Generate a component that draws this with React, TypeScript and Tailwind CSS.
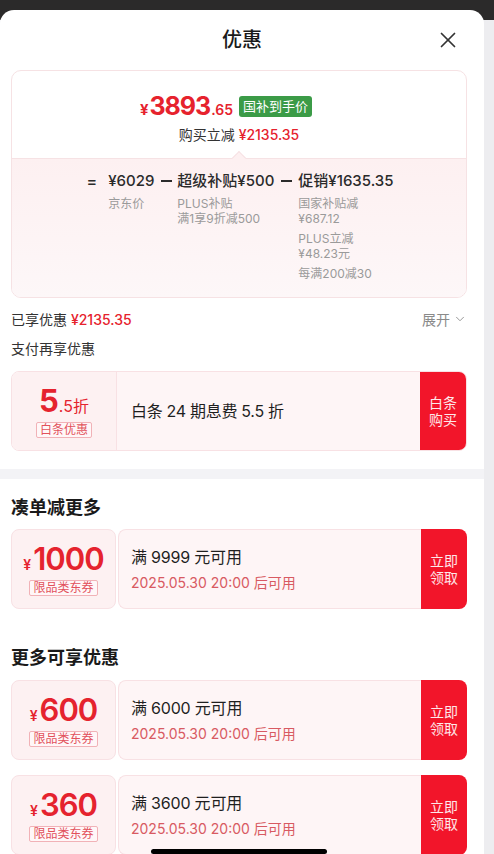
import { ChevronDown, X } from "lucide-react";

const coupons = [
  { amount: "1000", limit: "满 9999 元可用" },
  { amount: "600", limit: "满 6000 元可用" },
  { amount: "360", limit: "满 3600 元可用" },
];

function Minus({ className }: { className: string }) {
  return <span className={`mt-[10px] inline-block h-[2px] w-[11px] shrink-0 bg-[#2b2b2b] ${className}`} />;
}

function Coupon({ amount, limit }: { amount: string; limit: string }) {
  return (
    <div className="flex h-[80px] gap-[2px]">
      <div className="flex w-[105px] shrink-0 flex-col items-center justify-center rounded-[8px] border border-[#f8e1e4] bg-[#fdf1f2]">
        <div className="flex items-baseline text-[#e5232e]">
          <span className="mr-[2px] text-[14px] font-semibold">¥</span>
          <span className="text-[31px] font-semibold leading-[32px] tracking-[-1px]">{amount}</span>
        </div>
        <span className="mt-[5px] rounded-[2px] border border-[#f1b2b7] bg-[#fff7f8] px-[3px] text-[12px] leading-[14px] text-[#e2525c]">
          限品类东券
        </span>
      </div>
      <div className="flex flex-1">
        <div className="flex flex-1 flex-col justify-center rounded-l-[8px] border border-r-0 border-[#f8e1e4] bg-[#fef5f6] pl-[12px]">
          <p className="text-[16px] leading-[22px] tracking-[-0.2px] text-[#1f1f1f]">{limit}</p>
          <p className="mt-[6px] text-[14px] leading-[18px] text-[#d85a62]">2025.05.30 20:00 后可用</p>
        </div>
        <div className="flex w-[46px] items-center justify-center rounded-r-[8px] bg-[#f2152a] text-center text-[14px] leading-[17px] text-white/90">
          立即
          <br />
          领取
        </div>
      </div>
    </div>
  );
}

export default function App() {
  return (
    <div className="relative h-[854px] w-[494px] overflow-hidden bg-[linear-gradient(#2b2a2a_0_20px,#ededf0_20px)] font-['Inter','Noto_Sans_CJK_SC',sans-serif] text-[#1f1f1f]">
      <div className="mt-[10px] h-[844px] w-[484px] rounded-t-[14px] bg-white">
        <header className="relative flex h-[60px] items-center justify-center">
          <h1 className="text-[20px] font-medium text-[#1a1a1a]">优惠</h1>
          <X className="absolute right-[23px] top-[17px] text-[#333]" size={26} strokeWidth={1.6} />
        </header>

        <div className="pl-[11px] pr-[17px]">
          <div className="overflow-hidden rounded-[10px] border border-[#f6e2e4]">
            <div className="flex flex-col items-center pb-[13px] pt-[20px]">
              <div className="flex h-[30px] items-center pr-[26px]">
                <div className="flex items-baseline text-[#e6222d]">
                  <span className="mr-[1px] text-[15px] font-bold">¥</span>
                  <span className="text-[25px] font-bold leading-[30px] tracking-[-1px]">3893</span>
                  <span className="ml-[1px] text-[14px] font-semibold">.65</span>
                </div>
                <span className="ml-[6px] rounded-[3px] bg-[#3b9b47] px-[4px] text-[13px] leading-[21px] text-white">
                  国补到手价
                </span>
              </div>
              <p className="mt-[4px] text-[14px] leading-[20px] text-[#333]">
                购买立减 <span className="font-medium text-[#e6222d]">¥2135.35</span>
              </p>
            </div>

            <div className="relative border-t border-[#f6e2e4] bg-[linear-gradient(#fdf0f1,#fdf7f8)] pb-[16px] pt-[11px]">
              <div className="absolute left-1/2 top-[-6px] h-[10px] w-[10px] -translate-x-1/2 rotate-45 border-l border-t border-[#f6e2e4] bg-[#fdf0f1]" />
              <div className="flex justify-center pl-[2px] text-[15px] font-medium leading-[22px] text-[#2b2b2b]">
                <span className="mr-[11px] text-[16px]">=</span>
                <div>
                  <p>¥6029</p>
                  <p className="mt-[4px] text-[12px] font-normal leading-[15px] text-[#9a9a9a]">京东价</p>
                </div>
                <Minus className="ml-[7px] mr-[5px]" />
                <div>
                  <p>超级补贴¥500</p>
                  <div className="mt-[4px] text-[12px] font-normal leading-[15px] text-[#9a9a9a]">
                    <p>PLUS补贴</p>
                    <p>满1享9折减500</p>
                  </div>
                </div>
                <Minus className="ml-[7px] mr-[6px]" />
                <div>
                  <p>促销¥1635.35</p>
                  <div className="mt-[4px] flex flex-col gap-[5px] text-[12px] font-normal leading-[15px] text-[#9a9a9a]">
                    <div>
                      <p>国家补贴减</p>
                      <p>¥687.12</p>
                    </div>
                    <div>
                      <p>PLUS立减</p>
                      <p>¥48.23元</p>
                    </div>
                    <p>每满200减30</p>
                  </div>
                </div>
              </div>
            </div>
          </div>

          <div className="mt-[11px] flex h-[20px] items-center justify-between text-[14px]">
            <p className="text-[#333]">
              已享优惠 <span className="font-medium text-[#e6222d]">¥2135.35</span>
            </p>
            <span className="flex items-center gap-[3px] text-[#8a8a8a]">
              展开
              <ChevronDown size={14} strokeWidth={1.5} />
            </span>
          </div>
          <p className="mt-[10px] text-[14px] leading-[20px] text-[#333]">支付再享优惠</p>

          <div className="mt-[12px] flex h-[80px] overflow-hidden rounded-[8px] border border-[#f8e1e4]">
            <div className="flex w-[105px] shrink-0 flex-col items-center justify-center border-r border-[#f8e1e4] bg-[#fdf1f2]">
              <div className="flex items-baseline text-[#e5232e]">
                <span className="text-[31px] font-bold leading-[32px]">5</span>
                <span className="text-[16px]">.5折</span>
              </div>
              <span className="mt-[4px] rounded-[2px] border border-[#f1b2b7] bg-[#fff7f8] px-[3px] text-[12px] leading-[14px] text-[#e2525c]">
                白条优惠
              </span>
            </div>
            <div className="flex flex-1 items-center bg-[#fef5f6] pl-[14px] text-[16px] tracking-[-0.3px] text-[#1f1f1f]">
              白条 24 期息费 5.5 折
            </div>
            <div className="flex w-[46px] items-center justify-center bg-[#f2152a] text-center text-[14px] leading-[17px] text-white/90">
              白条
              <br />
              购买
            </div>
          </div>
        </div>

        <div className="mt-[18px] h-[10px] bg-[#f3f3f6]" />

        <div className="pl-[11px] pr-[17px]">
          <h2 className="mt-[16px] text-[18px] font-semibold leading-[26px] text-[#1a1a1a]">凑单减更多</h2>
          <div className="mt-[8px]">
            <Coupon {...coupons[0]} />
          </div>

          <h2 className="mt-[36px] text-[18px] font-semibold leading-[26px] text-[#1a1a1a]">更多可享优惠</h2>
          <div className="mt-[9px] flex flex-col gap-[15px]">
            <Coupon {...coupons[1]} />
            <Coupon {...coupons[2]} />
          </div>
        </div>
      </div>

      <div className="absolute bottom-[0px] left-[151px] h-[5px] w-[176px] rounded-full bg-black" />
    </div>
  );
}
